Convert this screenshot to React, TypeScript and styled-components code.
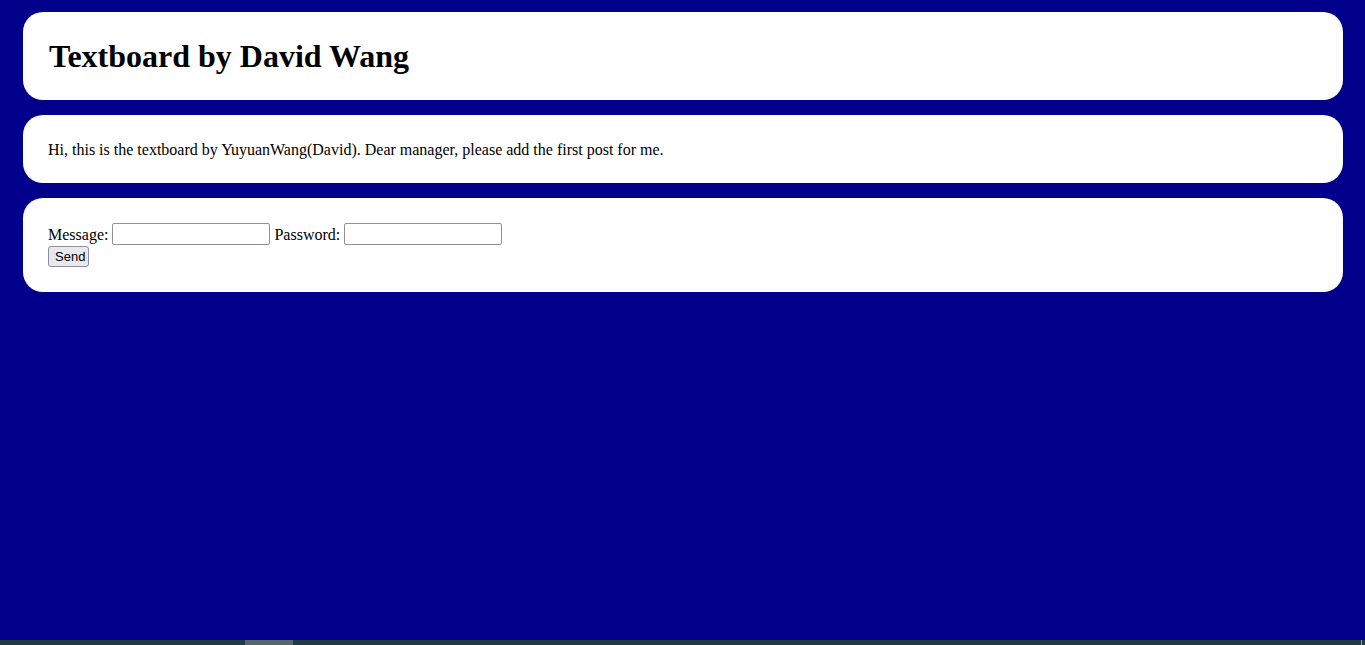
import React from "react";
import styled, { createGlobalStyle } from "styled-components";

const GlobalStyle = createGlobalStyle`
  html, body {
    margin: 0;
    padding: 0;
    background: #00008b;
  }
  body {
    font-family: "Liberation Serif", "Times New Roman", serif;
    font-size: 16px;
    color: #000;
  }
`;

const Page = styled.div`
  min-height: 100vh;
  display: flex;
  flex-direction: column;
  box-sizing: border-box;
`;

const Main = styled.main`
  flex: 1;
  display: flex;
  flex-direction: column;
  gap: 15px;
  padding: 12px 22px 0 23px;
`;

const Card = styled.section<{ $tight?: boolean }>`
  background: #fff;
  border-radius: 20px;
  padding: ${(p) => (p.$tight ? "26px 25px 24px" : "25px")};
`;

const Title = styled.h1`
  margin: 0;
  padding-left: 1px;
  font-size: 32px;
  line-height: 38px;
  font-weight: bold;
`;

const Intro = styled.p`
  margin: 0;
  line-height: 18px;
`;

const Form = styled.form`
  display: flex;
  flex-direction: column;
  align-items: flex-start;
`;

const FieldRow = styled.div`
  display: flex;
  align-items: center;
  height: 22px;
  gap: 4px;
`;

const Label = styled.label`
  line-height: 18px;
  margin-top: 2px;
`;

const Input = styled.input`
  box-sizing: border-box;
  width: 158px;
  height: 22px;
  margin: 0;
  padding: 1px 2px;
  border: 1px solid #8f8f9d;
  border-radius: 2px;
  font-family: "Liberation Sans", Arial, sans-serif;
  font-size: 13px;
  background: #fff;
`;

const SendButton = styled.button`
  box-sizing: border-box;
  margin-top: 1px;
  width: 41px;
  height: 21px;
  padding: 1px 6px;
  border: 1px solid #8f8f9d;
  border-radius: 3px;
  background: #e9e9ed;
  font-family: "Liberation Sans", Arial, sans-serif;
  font-size: 13px;
  color: #000;
`;

const BottomBar = styled.div`
  height: 5px;
  background: #1f3a40;
  display: flex;
  align-items: stretch;
  justify-content: space-between;
`;

const Thumb = styled.div`
  margin-left: 245px;
  width: 48px;
  background: #56666e;
`;

const Tick = styled.div`
  width: 1px;
  margin-right: 3px;
  background: #8a9aa0;
`;

export default function App() {
  return (
    <>
      <GlobalStyle />
      <Page>
        <Main>
          <Card>
            <Title>Textboard by David Wang</Title>
          </Card>
          <Card $tight>
            <Intro>
              Hi, this is the textboard by YuyuanWang(David). Dear manager,
              please add the first post for me.
            </Intro>
          </Card>
          <Card>
            <Form onSubmit={(e) => e.preventDefault()}>
              <FieldRow>
                <Label htmlFor="msg">Message:</Label>
                <Input id="msg" type="text" />
                <Label htmlFor="pwd">Password:</Label>
                <Input id="pwd" type="password" />
              </FieldRow>
              <SendButton type="submit">Send</SendButton>
            </Form>
          </Card>
        </Main>
        <BottomBar>
          <Thumb />
          <Tick />
        </BottomBar>
      </Page>
    </>
  );
}
